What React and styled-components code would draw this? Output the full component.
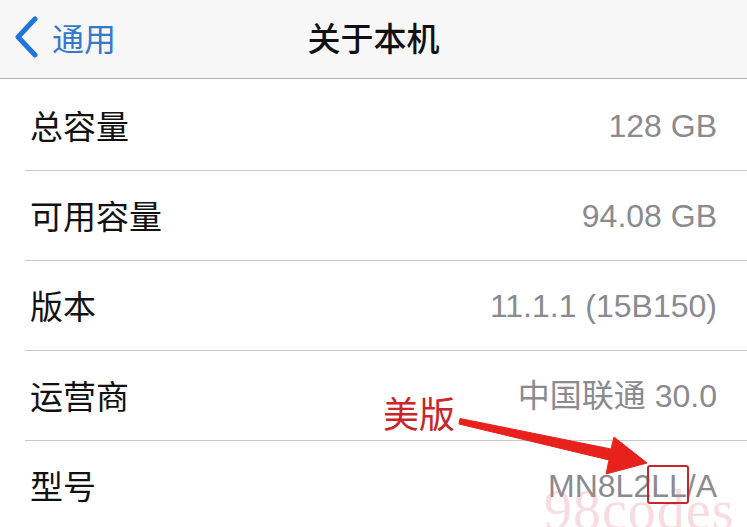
import React from "react";
import styled, { createGlobalStyle } from "styled-components";

const Global = createGlobalStyle`
  html, body { margin: 0; padding: 0; background: #ffffff; }
  body { font-family: "Liberation Sans", "Noto Sans CJK SC", sans-serif; overflow: hidden; }
`;

const Screen = styled.div`
  position: relative;
  width: 747px;
  height: 527px;
  overflow: hidden;
  background: #ffffff;
`;

const NavBar = styled.header`
  height: 78px;
  background: #f7f7f7;
  border-bottom: 1px solid #b0b0b0;
  display: grid;
  grid-template-columns: 1fr auto 1fr;
  align-items: center;
`;

const Back = styled.div`
  display: flex;
  align-items: center;
  gap: 13px;
  padding-left: 13px;
  color: #3479c9;
  font-family: "Noto Sans CJK SC", sans-serif;
  font-size: 32px;
  line-height: 1;
  padding-bottom: 4px;
`;

const Title = styled.h1`
  margin: 0;
  font-family: "Noto Sans CJK SC", sans-serif;
  font-weight: 500;
  font-size: 33px;
  color: #111111;
  line-height: 1;
  padding-bottom: 4px;
`;

const List = styled.div`
  padding-top: 2px;
  display: flex;
  flex-direction: column;
`;

const Row = styled.div`
  height: 89px;
  margin-left: 25px;
  padding: 0 30px 0 5px;
  border-bottom: ${(p) => (p.$last ? "none" : "1px solid #c8c8cc")};
  display: flex;
  align-items: center;
  justify-content: space-between;
`;

const Label = styled.span`
  font-family: "Noto Sans CJK SC", sans-serif;
  font-size: 33px;
  color: #111111;
  line-height: 1;
`;

const Value = styled.span`
  font-family: "Liberation Sans", "Noto Sans CJK SC", sans-serif;
  font-size: 32px;
  color: #8a8a8f;
  line-height: 1;
`;

const Note = styled.span`
  position: absolute;
  left: 383px;
  top: 394px;
  font-family: "Noto Sans CJK SC", sans-serif;
  font-size: 36px;
  line-height: 1;
  color: #c9252b;
`;

const Marker = styled.div`
  position: absolute;
  left: 647px;
  top: 465px;
  width: 38px;
  height: 35px;
  border: 2px solid #c4262b;
  border-radius: 3px;
`;

const Overlay = styled.svg`
  position: absolute;
  left: 0;
  top: 0;
  pointer-events: none;
`;

const Watermark = styled.span`
  position: absolute;
  left: 544px;
  top: 482px;
  font-family: "Liberation Serif", serif;
  font-size: 56px;
  line-height: 1;
  color: rgba(226, 120, 130, 0.25);
  letter-spacing: 1px;
`;

const rows = [
  ["总容量", "128 GB"],
  ["可用容量", "94.08 GB"],
  ["版本", "11.1.1 (15B150)"],
  ["运营商", "中国联通 30.0"],
  ["型号", "MN8L2LL/A"],
];

export default function App() {
  return (
    <Screen>
      <Global />
      <NavBar>
        <Back>
          <svg width="26" height="42" viewBox="0 0 26 42">
            <path d="M22 3 L5 21 L22 39" fill="none" stroke="#1f74de" strokeWidth="5" strokeLinecap="round" strokeLinejoin="round" />
          </svg>
          <span>通用</span>
        </Back>
        <Title>关于本机</Title>
        <div />
      </NavBar>
      <List>
        {rows.map(([l, v], i) => (
          <Row key={l} $last={i === rows.length - 1}>
            <Label>{l}</Label>
            <Value>{v}</Value>
          </Row>
        ))}
      </List>
      <Watermark>98codes</Watermark>
      <Note>美版</Note>
      <Overlay width="747" height="527" viewBox="0 0 747 527">
        <polygon
          points="460,418.5 611,449 614,437 647,463 606,474 609,460 459,424"
          fill="#e8211d"
          stroke="#e8211d"
          strokeWidth="1"
          strokeLinejoin="round"
        />
      </Overlay>
      <Marker />
    </Screen>
  );
}
